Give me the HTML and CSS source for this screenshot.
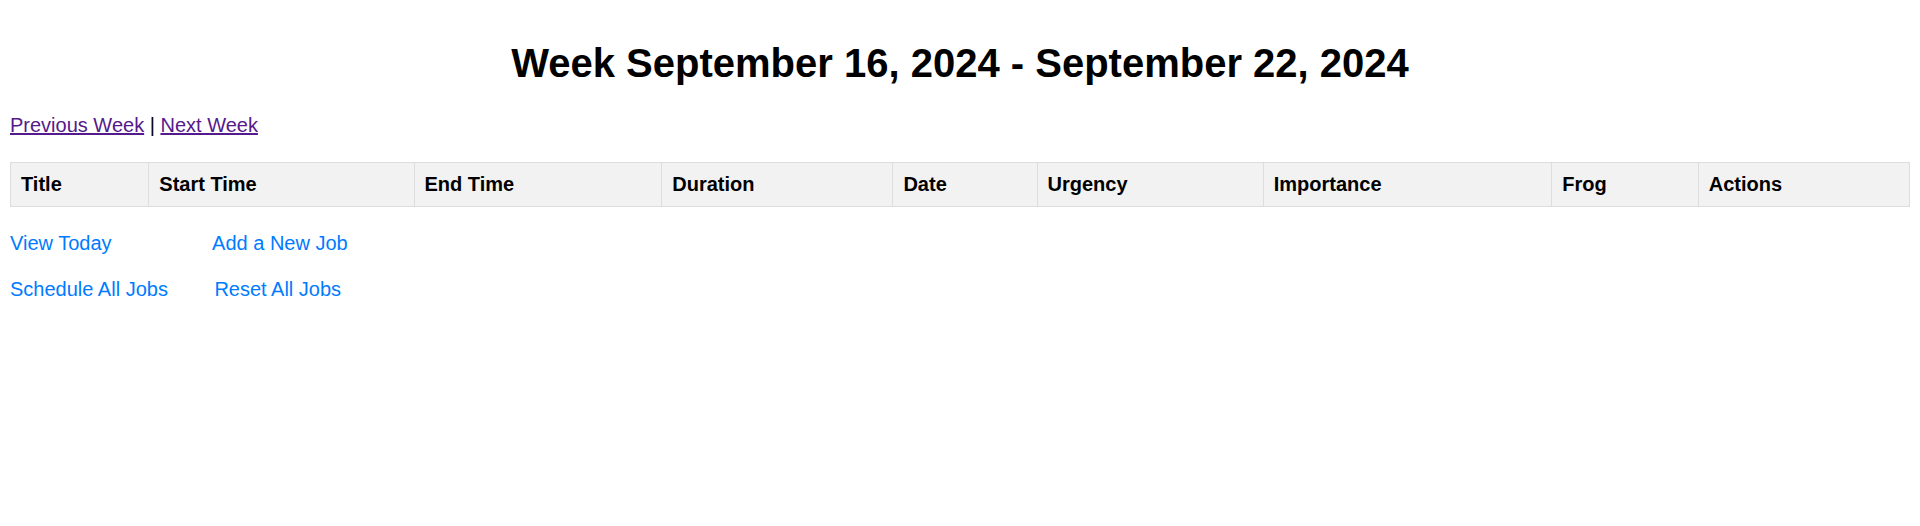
FILE: index.html
```html
<!DOCTYPE html>
<html lang="en">
<head>
<meta charset="utf-8">
<title>Week View</title>
<link rel="stylesheet" href="styles.css">
</head>
<body>
<h1 class="title">Week September 16, 2024 - September 22, 2024</h1>
<div class="week-nav"><a class="nav-link" href="#prev">Previous Week</a> | <a class="nav-link" href="#next">Next Week</a></div>
<table class="jobs">
  <thead>
    <tr>
      <th>Title</th>
      <th>Start Time</th>
      <th>End Time</th>
      <th>Duration</th>
      <th>Date</th>
      <th>Urgency</th>
      <th>Importance</th>
      <th>Frog</th>
      <th>Actions</th>
    </tr>
  </thead>
  <tbody></tbody>
</table>
<div class="actions">
  <div class="action-row row-one">
    <a class="action-link" href="#today">View Today</a>
    <a class="action-link" href="#add">Add a New Job</a>
  </div>
  <div class="action-row row-two">
    <a class="action-link" href="#schedule">Schedule All Jobs</a>
    <a class="action-link" href="#reset">Reset All Jobs</a>
  </div>
</div>
</body>
</html>
```

FILE: styles.css
```css
html, body {
  background: #ffffff;
}

body {
  margin: 0;
  padding: 0 10px 10px;
  font-family: "Liberation Sans", Arial, sans-serif;
  font-size: 20px;
  color: #000000;
}

.title {
  font-size: 40px;
  font-weight: bold;
  text-align: center;
  line-height: 46px;
  margin: 40px 0 28px;
}

.week-nav {
  line-height: 23px;
}

.nav-link {
  color: #551a8b;
  text-decoration: underline;
}

.jobs {
  width: 100%;
  border-collapse: collapse;
  margin-top: 25px;
}

.jobs th {
  text-align: left;
  font-weight: bold;
  font-size: 20px;
  line-height: 23px;
  padding: 10px;
  background: #f2f2f2;
  border: 1px solid #dddddd;
}

.actions {
  margin-top: 25px;
  display: flex;
  flex-direction: column;
  gap: 23px;
}

.action-row {
  display: flex;
  align-items: baseline;
}

.row-one {
  gap: 100.5px;
}

.row-two {
  gap: 46.5px;
}

.action-link {
  color: #007bff;
  text-decoration: none;
  font-size: 20px;
  line-height: 23px;
}
```
